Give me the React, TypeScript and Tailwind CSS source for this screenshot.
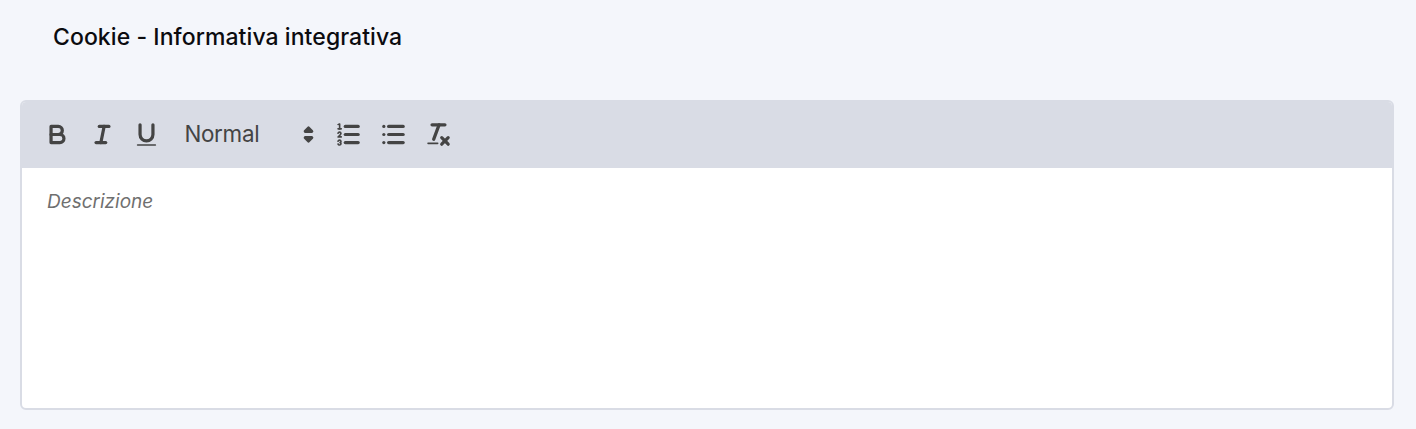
const iconClass = 'w-[29px] h-[29px] fill-none stroke-[#444] stroke-2 [stroke-linecap:round] [stroke-linejoin:round]';

function ToolButton({ children }: { children: React.ReactNode }) {
  return (
    <button className="w-[44.8px] h-[38px] flex items-center justify-center shrink-0">
      <svg viewBox="0 0 18 18" className={iconClass}>
        {children}
      </svg>
    </button>
  );
}

export default function App() {
  return (
    <div className="w-[1416px] h-[429px] bg-[#f4f6fb] pl-5 pr-[22px] font-['Inter',sans-serif]">
      <div className="h-[100px] pl-[33px] pt-[23px]">
        <h2 className="text-[23px] leading-[29px] font-medium text-[#0b0b0f] tracking-[0.07px]">
          Cookie - Informativa integrativa
        </h2>
      </div>

      <div className="h-[310px] rounded-md border-2 border-[#d9dce5] bg-white flex flex-col overflow-hidden">
        {/* toolbar */}
        <div className="h-[68px] shrink-0 -mt-[2px] bg-[#d9dce5] flex items-center pl-[13px]">
          <ToolButton>
            <path d="M5,4H9.5A2.5,2.5,0,0,1,12,6.5v0A2.5,2.5,0,0,1,9.5,9H5A0,0,0,0,1,5,9V4A0,0,0,0,1,5,4Z" />
            <path d="M5,9h5.5A2.5,2.5,0,0,1,13,11.5v0A2.5,2.5,0,0,1,10.5,14H5a0,0,0,0,1,0,0V9A0,0,0,0,1,5,9Z" />
          </ToolButton>
          <ToolButton>
            <line x1="7" x2="13" y1="4" y2="4" />
            <line x1="5" x2="11" y1="14" y2="14" />
            <line x1="8" x2="10" y1="14" y2="4" />
          </ToolButton>
          <ToolButton>
            <path d="M5,3V9a4.006,4.006,0,0,0,4,4H9a4.006,4.006,0,0,0,4-4V3" />
            <rect x="3" y="15" width="12" height="1" rx="0.5" ry="0.5" className="fill-[#444] stroke-none" />
          </ToolButton>

          <div className="w-[157px] h-[38px] shrink-0 flex items-center justify-between pl-[15px] pr-[3px] text-[22.4px] text-[#444]">
            <span className="font-['Inter',sans-serif] font-normal tracking-[-0.3px]">Normal</span>
            <svg viewBox="0 0 18 18" className="w-[29px] h-[29px] fill-[#444] stroke-[#444] stroke-2 [stroke-linejoin:round]">
              <polygon points="7 11 9 13 11 11 7 11" />
              <polygon points="7 7 9 5 11 7 7 7" />
            </svg>
          </div>

          <ToolButton>
            <line x1="7" x2="15" y1="4" y2="4" />
            <line x1="7" x2="15" y1="9" y2="9" />
            <line x1="7" x2="15" y1="14" y2="14" />
            <line x1="2.5" x2="4.5" y1="5.5" y2="5.5" className="stroke-1" />
            <path
              d="M3.5,6A0.5,0.5,0,0,1,3,5.5V3.085l-0.276.138A0.5,0.5,0,0,1,2.053,3c-0.124-.247-0.023-0.324.224-0.447l1-.5A0.5,0.5,0,0,1,4,2.5v3A0.5,0.5,0,0,1,3.5,6Z"
              className="fill-[#444] stroke-none"
            />
            <path d="M4.5,10.5h-2c0-.234,1.85-1.076,1.85-2.234A0.959,0.959,0,0,0,2.5,8.156" className="stroke-1" />
            <path d="M2.5,14.846a0.959,0.959,0,0,0,1.85-.109A0.7,0.7,0,0,0,3.75,14a0.688,0.688,0,0,0,.6-0.736,0.959,0.959,0,0,0-1.85-.109" className="stroke-1" />
          </ToolButton>
          <ToolButton>
            <line x1="6" x2="15" y1="4" y2="4" />
            <line x1="6" x2="15" y1="9" y2="9" />
            <line x1="6" x2="15" y1="14" y2="14" />
            <line x1="3" x2="3" y1="4" y2="4" />
            <line x1="3" x2="3" y1="9" y2="9" />
            <line x1="3" x2="3" y1="14" y2="14" />
          </ToolButton>
          <ToolButton>
            <line x1="5" x2="13" y1="3" y2="3" />
            <line x1="6" x2="9.35" y1="12" y2="3" />
            <line x1="11" x2="15" y1="11" y2="15" />
            <line x1="15" x2="11" y1="11" y2="15" />
            <rect x="2" y="14" width="7" height="1" rx="0.5" ry="0.5" className="fill-[#444] stroke-none" />
          </ToolButton>
        </div>

        {/* editor */}
        <div className="flex-1 pl-[25px] pt-[20px]">
          <p className="text-[19px] leading-[27px] italic text-[#6f6f6f]">Descrizione</p>
        </div>
      </div>
    </div>
  );
}
